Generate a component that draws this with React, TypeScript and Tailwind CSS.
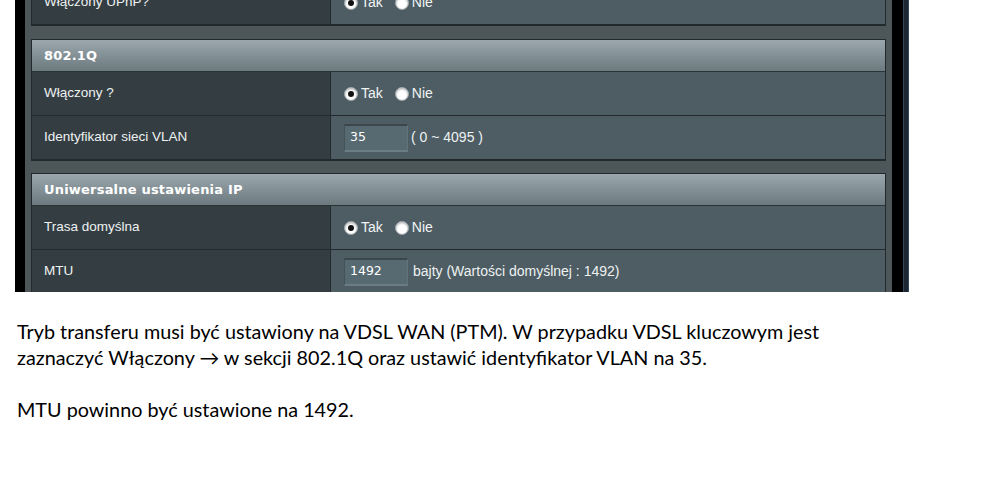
const Radio = ({ checked }: { checked: boolean }) => (
  <span className="inline-flex h-[14px] w-[14px] items-center justify-center rounded-full border border-[#9aa4a8] bg-white shadow-[inset_0_1px_2px_rgba(0,0,0,0.35)]">
    {checked && <span className="h-[6px] w-[6px] rounded-full bg-[#111]" />}
  </span>
);

const YesNo = () => (
  <div className="flex items-center text-[14px] text-[#f2f4f5]">
    <Radio checked />
    <span className="ml-[3px]">Tak</span>
    <span className="ml-[12px]" />
    <Radio checked={false} />
    <span className="ml-[3px]">Nie</span>
  </div>
);

const Field = ({ value }: { value: string }) => (
  <div className="flex h-[28px] w-[64px] items-center border-t-2 border-l border-r border-b-2 border-t-[#3b474b] border-l-[#44525a] border-r-[#62737a] border-b-[#6b7d84] bg-[#586a71] pl-[5px] font-['DejaVu_Sans',sans-serif] text-[12.5px] text-white">
    {value}
  </div>
);

const Row = ({ label, children }: { label: string; children: React.ReactNode }) => (
  <div className="flex h-[44px] border-b border-[#222a2d]">
    <div className="flex w-[299px] items-center border-r border-[#222a2d] bg-[#343e42] pl-[12px] text-[13.5px] text-[#eef1f2]">
      {label}
    </div>
    <div className="flex flex-1 items-center bg-[#4d5d63] pl-[13px]">{children}</div>
  </div>
);

const Header = ({ title }: { title: string }) => (
  <div className="flex h-[32px] items-center border-b border-[#2a3336] bg-gradient-to-b from-[#9ba7ac] to-[#6c7a80] pl-[12px] font-['DejaVu_Sans',sans-serif] text-[13px] font-bold tracking-[0.2px] text-white">
    {title}
  </div>
);

export default function App() {
  return (
    <div className="min-h-screen bg-white font-['Liberation_Sans',Arial,sans-serif]">
      <div className="ml-[15px] flex h-[292px] w-[894px] overflow-hidden">
        <div className="w-[10px] bg-black" />
        <div className="flex-1 bg-[#4d575a] px-[6px]">
          <div className="-mt-[19px] flex flex-col">
            <div className="border border-t-0 border-[#222a2d]">
              <Row label="Włączony UPnP?">
                <YesNo />
              </Row>
            </div>

            <div className="mt-[13px] border border-[#222a2d]">
              <Header title="802.1Q" />
              <Row label="Włączony ?">
                <YesNo />
              </Row>
              <Row label="Identyfikator sieci VLAN">
                <div className="flex items-center text-[14px] text-[#eef1f2]">
                  <Field value="35" />
                  <span className="ml-[3px]">( 0 ~ 4095 )</span>
                </div>
              </Row>
            </div>

            <div className="mt-[12px] border border-[#222a2d]">
              <Header title="Uniwersalne ustawienia IP" />
              <Row label="Trasa domyślna">
                <YesNo />
              </Row>
              <Row label="MTU">
                <div className="flex items-center text-[14px] text-[#eef1f2]">
                  <Field value="1492" />
                  <span className="ml-[5px]">bajty (Wartości domyślnej : 1492)</span>
                </div>
              </Row>
            </div>
          </div>
        </div>
        <div className="w-[11px] bg-black" />
        <div className="w-[6px] border-x border-[#33475a] bg-[#1c2733]" />
      </div>

      <div className="ml-[17px] mt-[26px] font-['Lato',sans-serif] text-[19.8px] leading-[26px] text-black">
        <p>Tryb transferu musi być ustawiony na VDSL WAN (PTM). W przypadku VDSL kluczowym jest</p>
        <p>zaznaczyć Włączony → w sekcji 802.1Q oraz ustawić identyfikator VLAN na 35.</p>
        <p className="mt-[26px]">MTU powinno być ustawione na 1492.</p>
      </div>
    </div>
  );
}
